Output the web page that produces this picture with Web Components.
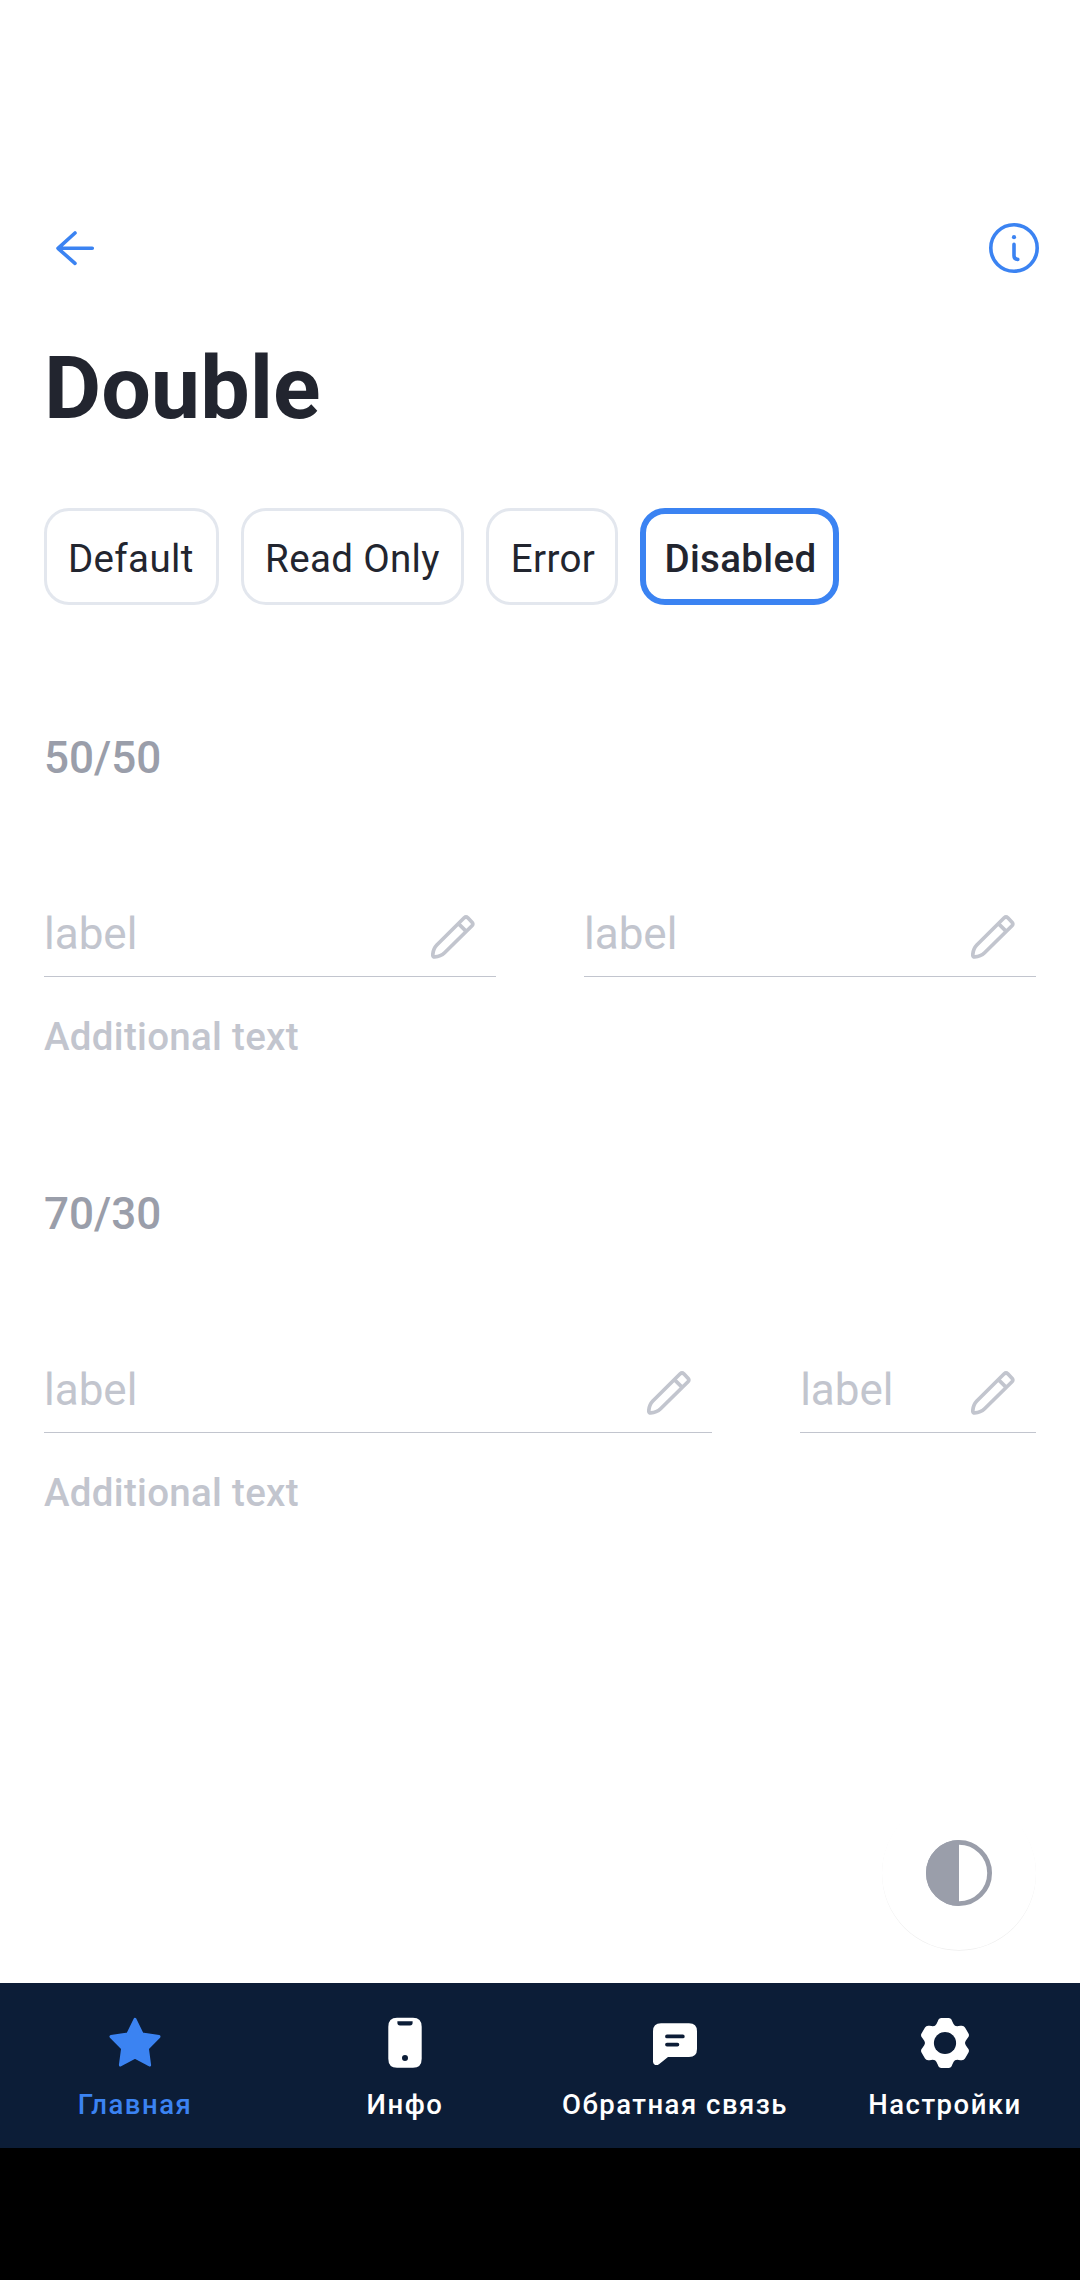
<!DOCTYPE html>
<html lang="ru">
<head>
<meta charset="utf-8">
<title>Double</title>
<style>
html,body{margin:0;background:#fff}
body{width:1080px;height:2280px;overflow:hidden;font-family:Roboto,"Noto Sans",sans-serif;color:#22252f}
</style>
</head>
<body>
<app-screen>
  <app-header slot="header"></app-header>
  <screen-title>Double</screen-title>
  <chip-group>
    <chip-item style="--w:175px;--nudge:-1.4px">Default</chip-item>
    <chip-item style="--w:223px">Read Only</chip-item>
    <chip-item style="--w:132px;--nudge:2px">Error</chip-item>
    <chip-item selected style="--w:199px;--nudge:2px">Disabled</chip-item>
  </chip-group>
  <field-section heading="50/50">
    <text-field style="--grow:452" helper="Additional text">label</text-field>
    <text-field style="--grow:452">label</text-field>
  </field-section>
  <field-section heading="70/30">
    <text-field style="--grow:667.6" helper="Additional text">label</text-field>
    <text-field style="--grow:235.7">label</text-field>
  </field-section>
  <theme-fab slot="fab"></theme-fab>
  <tab-bar slot="footer">
    <tab-item icon="star" active>Главная</tab-item>
    <tab-item icon="phone">Инфо</tab-item>
    <tab-item icon="chat">Обратная связь</tab-item>
    <tab-item icon="gear">Настройки</tab-item>
  </tab-bar>
</app-screen>
<script>
const define = (name, render) => customElements.define(name, class extends HTMLElement {
  connectedCallback() {
    if (!this.shadowRoot) this.attachShadow({ mode: 'open' }).innerHTML = render(this);
  }
});

// Six-tooth gear outline around (33, 33), one tooth per 60 degrees.
function gearPath() {
  let d = '';
  for (let i = 0; i < 6; i++) {
    const a = i * Math.PI / 3;
    const p = (x, y) => (33 + x * Math.cos(a) - y * Math.sin(a)).toFixed(2) + ' ' + (33 + x * Math.sin(a) + y * Math.cos(a)).toFixed(2);
    d += (i ? 'Q' + p(-8.7, -18) + ' ' : 'M') + p(-7.2, -21.8) +
      'Q' + p(-6.2, -25.1) + ' ' + p(-3.5, -25.1) + 'L' + p(3.5, -25.1) +
      'Q' + p(6.2, -25.1) + ' ' + p(7.2, -21.8) + 'Q' + p(8.7, -18) + ' ' + p(10, -17.32);
  }
  return d + 'Q24.3 15 25.8 11.2Z';
}

const icons = {
  star: '<path fill="currentColor" stroke="currentColor" stroke-width="3" stroke-linejoin="round" d="M33 9.4L40.2 24.1L57 26.6L45.4 38.4L47.6 55L33 47.1L18.4 55L20.6 38.4L9 26.6L25.8 24.1Z"/>',
  phone: '<path fill="currentColor" fill-rule="evenodd" d="M25 7.8H41Q49.7 7.8 49.7 16.8V48.8Q49.7 57.8 41 57.8H25Q16.3 57.8 16.3 48.8V16.8Q16.3 7.8 25 7.8ZM25.4 11.2V13Q25.4 15.4 28 15.4H38Q40.6 15.4 40.6 13V11.2ZM33 45a3 3 0 1 0 0 6a3 3 0 1 0 0-6Z"/>',
  chat: '<path fill="currentColor" d="M19 13.3H47Q55 13.3 55 21.3V39Q55 47 47 47H26L17 54.2Q14.5 55.8 12.4 54.5Q11 53.5 11 51.5V21.3Q11 13.3 19 13.3Z"/><path d="M25 26.4H40.8M25 34.6H35.4" fill="none" stroke="#0c1d37" stroke-width="3.8" stroke-linecap="round"/>',
  gear: `<path fill="currentColor" d="${gearPath()}"/><circle cx="33" cy="33" r="11.1" fill="#0c1d37"/>`
};

define('app-screen', () => `
  <style>
    :host{display:flex;flex-direction:column;position:relative;height:2280px}
    main{flex:1;box-sizing:border-box;padding:0 44px}
    ::slotted(theme-fab){position:absolute;left:882px;top:1796px}
    .system{height:132px;background:#000}
  </style>
  <slot name="header"></slot><main><slot></slot></main>
  <slot name="fab"></slot><slot name="footer"></slot><div class="system"></div>`);

define('app-header', () => `
  <style>
    :host{display:flex;justify-content:space-between;align-items:flex-start;box-sizing:border-box;height:293px;padding:215px 33px 0 42px}
    svg{display:block;fill:none;stroke:#3b83f2;stroke-width:3.6;stroke-linecap:round;stroke-linejoin:round}
  </style>
  <svg width="66" height="66" viewBox="0 0 66 66"><path d="M50.3 33.3H16M33 18L16 33.3L33 48.4"/></svg>
  <svg width="66" height="66" viewBox="0 0 66 66"><circle cx="33" cy="33" r="23.2"/><path d="M33 29.4V40.8Q33 44.4 36.8 44.4"/><circle cx="33" cy="22.2" r="2.1" fill="#3b83f2" stroke="none"/></svg>`);

define('screen-title', () => `
  <style>:host{display:block;margin-top:43px;font-size:88px;line-height:104px;font-weight:700}</style><slot></slot>`);

define('chip-group', () => `
  <style>:host{display:flex;gap:22px;margin-top:68px}</style><slot></slot>`);

define('chip-item', () => `
  <style>
    :host{display:flex;align-items:center;justify-content:center;box-sizing:border-box;width:var(--w);height:97px;border:3px solid #e3e7ee;border-radius:25px;padding-top:4px;font-size:38.5px;line-height:46px;letter-spacing:.35px;white-space:nowrap;text-indent:var(--nudge,0)}
    :host([selected]){border:6px solid #3b83f2;font-weight:500}
  </style><slot></slot>`);

define('field-section', el => `
  <style>
    :host{display:block;height:456px;box-sizing:border-box;padding-top:127px}
    h2{margin:0;font-size:44px;line-height:52px;font-weight:500;color:#9a9eaa}
    .row{display:flex;gap:88px;margin-top:124px}
  </style>
  <h2>${el.getAttribute('heading')}</h2><div class="row"><slot></slot></div>`);

define('text-field', el => `
  <style>
    :host{display:block;flex:var(--grow) 1 0;min-width:0;color:#c2c5ce}
    .input{display:flex;justify-content:space-between;height:68px;border-bottom:1px solid #c2c5ce;font-size:44px;line-height:52px}
    svg{display:block;margin:7px 21.5px 0 0;fill:none;stroke:currentColor;stroke-width:3.7;stroke-linejoin:round}
    .helper{margin-top:37px;font-size:38.5px;line-height:46px;font-weight:500;letter-spacing:.3px}
  </style>
  <div class="input"><slot></slot>
    <svg width="44" height="44" viewBox="0 0 44 44"><path d="M33.2 2.8Q35 1.1 36.8 2.8L41 7.2Q42.6 9 41 10.8L13.6 37.8Q9.6 41.7 3.8 41.9Q1.8 41.9 1.8 39.8Q2 34 5.8 30Z M27.4 8.6L35.2 16.4"/></svg>
  </div>
  ${el.hasAttribute('helper') ? `<div class="helper">${el.getAttribute('helper')}</div>` : ''}`);

define('theme-fab', () => `
  <style>
    :host{display:flex;align-items:center;justify-content:center;width:154px;height:154px;border-radius:50%;background:#fff;box-shadow:0 .7px .6px rgba(0,0,0,.07)}
    svg{display:block}
  </style>
  <svg width="66" height="66" viewBox="0 0 66 66"><circle cx="33" cy="33" r="30.6" fill="none" stroke="#9a9eaa" stroke-width="4.8"/><path d="M33 0A33 33 0 0 0 33 66Z" fill="#9a9eaa"/></svg>`);

define('tab-bar', () => `
  <style>:host{display:flex;height:165px;background:#0c1d37}</style><slot></slot>`);

define('tab-item', el => `
  <style>
    :host{display:flex;flex:1 1 0;flex-direction:column;align-items:center;color:#fff;padding-top:27px;box-sizing:border-box;min-width:0}
    :host([active]){color:#3b83f2}
    svg{display:block}
    span{margin:13px 0 0;font-size:27.5px;line-height:32px;font-weight:500;letter-spacing:1.5px;white-space:nowrap}
  </style>
  <svg width="66" height="66" viewBox="0 0 66 66">${icons[el.getAttribute('icon')]}</svg><span><slot></slot></span>`);
</script>
</body>
</html>
